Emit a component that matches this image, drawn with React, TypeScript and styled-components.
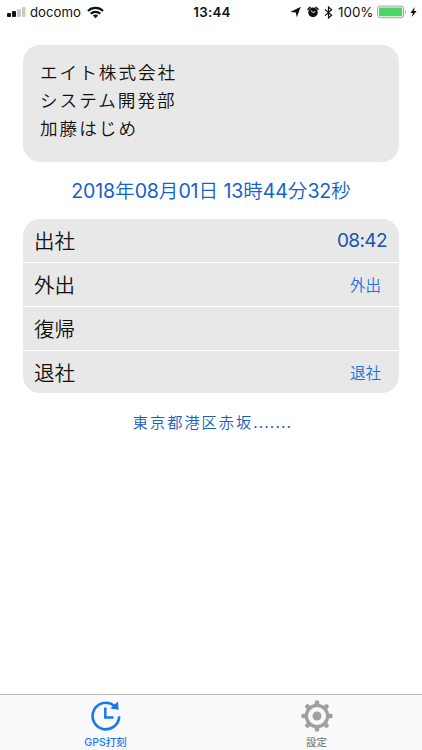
import React from "react";
import styled, { createGlobalStyle } from "styled-components";

const GlobalStyle = createGlobalStyle`
  html, body { margin: 0; background: #fff; }
  body { font-family: Inter, "Noto Sans CJK JP", sans-serif; color: #111; overflow: hidden; }
  * { box-sizing: border-box; }
`;

const Screen = styled.div`
  width: 422px;
  height: 750px;
  display: flex;
  flex-direction: column;
  background: #fff;
`;

const StatusBar = styled.header`
  height: 24px;
  flex: none;
  display: grid;
  grid-template-columns: 1fr 44px 1fr;
  align-items: center;
  padding: 0 5px 0 7px;
  font-size: 13px;
  line-height: 24px;
  color: #111;
`;

const StatusGroup = styled.div<{ $end?: boolean }>`
  display: flex;
  align-items: center;
  height: 24px;
  justify-content: ${(p) => (p.$end ? "flex-end" : "flex-start")};
  svg { flex: none; display: block; }
`;

const Carrier = styled.span`
  margin: 0 6px 0 4px;
  width: 51px;
  font-size: 13.2px;
  white-space: nowrap;
`;

const Clock = styled.span`
  font-weight: 600;
  font-size: 13.3px;
  letter-spacing: 0.3px;
  text-align: center;
  white-space: nowrap;
`;

const Percent = styled.span`
  margin: 0 3px 0 5px;
  width: 36px;
  font-size: 13.4px;
  white-space: nowrap;
`;

const IconGap = styled.span<{ $size: number }>`
  flex: none;
  width: ${(p) => p.$size}px;
`;

const Content = styled.main`
  flex: 1;
  padding: 21px 23px 0;
  display: flex;
  flex-direction: column;
`;

const ProfileCard = styled.section`
  height: 117px;
  padding: 14px 17px;
  border-radius: 17px;
  background: #e8e8e8;
  font-size: 17.6px;
  font-weight: 350;
  line-height: 28px;
  letter-spacing: 2px;
`;

const Timestamp = styled.div`
  height: 57px;
  line-height: 59px;
  text-align: center;
  font-size: 19.6px;
  font-weight: 350;
  color: #175fca;
  white-space: nowrap;
`;

const Digits = styled.span`
  font-weight: 400;
  letter-spacing: -0.17px;
`;

const PunchList = styled.section`
  height: 174px;
  display: grid;
  grid-template-rows: 43px 43px 43px 42px;
  row-gap: 1px;
  border-radius: 17px;
  overflow: hidden;
`;

const PunchRow = styled.div`
  display: flex;
  align-items: center;
  justify-content: space-between;
  padding: 0 12px 0 11px;
  background: #e8e8e8;
`;

const Label = styled.span`
  padding-top: 2px;
  font-size: 20.5px;
  font-weight: 350;
  line-height: 30px;

  ${PunchRow}:last-child & {
    padding-top: 3px;
  }
`;

const Time = styled.span`
  font-size: 19px;
  letter-spacing: -0.6px;
  line-height: 30px;
  padding-top: 1px;
  color: #1654b3;
`;

const PunchButton = styled.button`
  border: 0;
  padding: 0 6px 1px;
  background: none;
  font: 350 15.5px "Noto Sans CJK JP", sans-serif;
  color: #1c72df;
`;

const Address = styled.div`
  height: 58px;
  padding-left: 3px;
  line-height: 60px;
  text-align: center;
  font-size: 15.2px;
  font-weight: 350;
  letter-spacing: 2px;
  color: #195dbc;
`;

const Dots = styled.span`
  font-weight: 400;
  letter-spacing: 1.2px;
`;

const TabBar = styled.nav`
  height: 56px;
  flex: none;
  display: grid;
  grid-template-columns: 1fr 1fr;
  border-top: 1px solid #bcbcbc;
  background: #f9f9f9;
`;

const Tab = styled.button<{ $active?: boolean }>`
  display: flex;
  flex-direction: column;
  align-items: center;
  border: 0;
  background: none;
  padding: 4px 0 0;
  font: 500 10.5px/15px Inter, "Noto Sans CJK JP", sans-serif;
  color: ${(p) => (p.$active ? "#1679ee" : "#858585")};
  svg { display: block; flex: none; margin-bottom: 2px; }
`;

const SignalIcon = () => (
  <svg width="19" height="12" viewBox="0 0 19 12">
    <rect x="0" y="7" width="4" height="4" rx="1" fill="#111" />
    <rect x="5" y="5" width="4" height="6" rx="1" fill="#111" />
    <rect x="10" y="3" width="4" height="8" rx="1" fill="#c8c8c8" />
    <rect x="15" y="1" width="3.5" height="10" rx="1" fill="#c8c8c8" />
  </svg>
);

const WifiIcon = () => (
  <svg width="17" height="13" viewBox="0 0 17 13" fill="none" stroke="#111" strokeWidth="2.1">
    <path d="M1 5C5 0.8 12 .8 16 5M3.7 7.8C6.3 5.2 10.7 5.2 13.3 7.8" />
    <path d="M8.5 12.2 5.8 9.5Q8.5 7.3 11.2 9.5Z" fill="#111" stroke="none" />
  </svg>
);

const LocationIcon = () => (
  <svg width="11" height="12" viewBox="0 0 11 12"><path d="M10.8 .8 6.8 11.2 5.8 6.4.2 6Z" fill="#111" /></svg>
);

const AlarmIcon = () => (
  <svg width="12" height="12" viewBox="0 0 12 12">
    <circle cx="6" cy="6.4" r="4.8" fill="#111" />
    <path d="M1 3.2 3 1.2M11 3.2 9 1.2" stroke="#111" strokeWidth="1.5" strokeLinecap="round" />
    <path d="M3.7 4.6 6 6.5 8.4 5.6" fill="none" stroke="#fff" strokeWidth=".9" />
  </svg>
);

const BluetoothIcon = () => (
  <svg width="9" height="13" viewBox="0 0 9 13"><path d="M1 3.4 7.6 9.2 4.5 12V1L7.6 3.8 1 9.6" fill="none" stroke="#111" strokeWidth="1.2" /></svg>
);

const BatteryIcon = () => (
  <svg width="30" height="14" viewBox="0 0 30 14">
    <rect x=".6" y="1.1" width="26" height="11.6" rx="2.6" fill="#fff" stroke="#999" strokeWidth=".9" />
    <rect x="2" y="2.5" width="23.2" height="8.8" rx="1.2" fill="#4bd562" />
    <path d="M28 4.8q1.8 2.1 0 4.2Z" fill="#999" />
  </svg>
);

const BoltIcon = () => (
  <svg width="7" height="12" viewBox="0 0 7 12"><path d="M4.8 1 .4 6.9h2.4L1.8 11 6.7 5.1H4Z" fill="#111" /></svg>
);

const PunchIcon = () => (
  <svg width="34" height="34" viewBox="0 0 34 34">
    <path d="M30.2 17.4A13.3 13.3 0 1 1 25.4 6.8" fill="none" stroke="#1679ee" strokeWidth="2.6" />
    <path d="M28.9 2.4 29.7 10.8 21.2 9.4Z" fill="#1679ee" />
    <path d="M16.3 8.5V18.6H24.5" fill="none" stroke="#1679ee" strokeWidth="2.5" />
  </svg>
);

const toothAngles = [0, 45, 90, 135, 180, 225, 270, 315];

const GearIcon = () => (
  <svg width="34" height="34" viewBox="0 0 34 34">
    <g fill="#a0a0a0">
      {toothAngles.map((a) => (
        <path key={a} d="M12.2 6.8 14.8 4.7V2.9Q14.8 1.3 17 1.3T19.2 2.9V4.7L21.8 6.8Z" transform={`rotate(${a} 17 17)`} />
      ))}
    </g>
    <circle cx="17" cy="17" r="10.6" fill="#f9f9f9" stroke="#a0a0a0" strokeWidth="3.2" />
    <circle cx="17" cy="17" r="4.5" fill="#a0a0a0" />
  </svg>
);

const dateParts = [
  ["2018", "年"],
  ["08", "月"],
  ["01", "日 "],
  ["13", "時"],
  ["44", "分"],
  ["32", "秒"],
];

const punches = [
  { label: "出社", time: "08:42" },
  { label: "外出", action: "外出" },
  { label: "復帰" },
  { label: "退社", action: "退社" },
];

export default function App() {
  return (
    <Screen lang="ja">
      <GlobalStyle />
      <StatusBar>
        <StatusGroup><SignalIcon /><Carrier>docomo</Carrier><WifiIcon /></StatusGroup>
        <Clock>13:44</Clock>
        <StatusGroup $end>
          <LocationIcon /><IconGap $size={6} /><AlarmIcon /><IconGap $size={5} /><BluetoothIcon />
          <Percent>100%</Percent><BatteryIcon /><IconGap $size={3} /><BoltIcon />
        </StatusGroup>
      </StatusBar>
      <Content>
        <ProfileCard>
          <div>エイト株式会社</div>
          <div>システム開発部</div>
          <div>加藤はじめ</div>
        </ProfileCard>
        <Timestamp>
          {dateParts.map(([value, unit]) => (
            <React.Fragment key={unit}><Digits>{value}</Digits>{unit}</React.Fragment>
          ))}
        </Timestamp>
        <PunchList>
          {punches.map((p) => (
            <PunchRow key={p.label}>
              <Label>{p.label}</Label>
              {p.time && <Time>{p.time}</Time>}
              {p.action && <PunchButton>{p.action}</PunchButton>}
            </PunchRow>
          ))}
        </PunchList>
        <Address>東京都港区赤坂<Dots>.......</Dots></Address>
      </Content>
      <TabBar>
        <Tab $active><PunchIcon />GPS打刻</Tab>
        <Tab><GearIcon />設定</Tab>
      </TabBar>
    </Screen>
  );
}
